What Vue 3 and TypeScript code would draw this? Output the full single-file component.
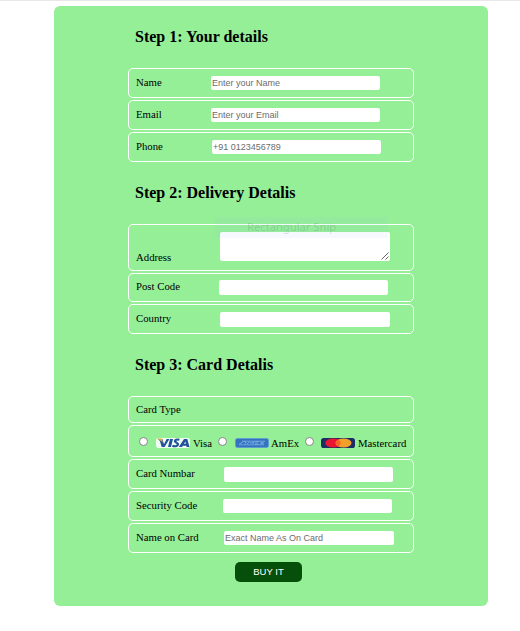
<script setup lang="ts">
interface Field {
  id: string
  label: string
  placeholder?: string
  kind: string
}

const personal: Field[] = [
  { id: 'name', label: 'Name', placeholder: 'Enter your Name', kind: 'person' },
  { id: 'email', label: 'Email', placeholder: 'Enter your Email', kind: 'person' },
  { id: 'phone', label: 'Phone', placeholder: '+91 0123456789', kind: 'phone' },
]
const delivery: Field[] = [
  { id: 'post', label: 'Post Code', kind: 'post' },
  { id: 'country', label: 'Country', kind: 'country' },
]
const card: Field[] = [
  { id: 'number', label: 'Card Numbar', kind: 'number' },
  { id: 'security', label: 'Security Code', kind: 'security' },
  { id: 'holder', label: 'Name on Card', placeholder: 'Exact Name As On Card', kind: 'holder' },
]
</script>

<template>
  <div class="page">
    <form class="checkout" @submit.prevent>
      <h2>Step 1: Your details</h2>
      <div class="group">
        <div v-for="f in personal" :key="f.id" class="row" :class="f.kind">
          <label :for="f.id">{{ f.label }}</label>
          <input :id="f.id" type="text" :placeholder="f.placeholder" />
        </div>
      </div>

      <h2>Step 2: Delivery Detalis</h2>
      <div class="group">
        <div class="row address">
          <label for="address">Address</label>
          <span class="area">
            <textarea id="address"></textarea>
            <svg class="grip" width="8" height="8" viewBox="0 0 8 8">
              <path d="M0.5 7.5L7.5 0.5M4.5 7.5L7.5 4.5" stroke="#555" stroke-width="0.9" fill="none" />
            </svg>
          </span>
          <span class="ghost">Rectangular Snip</span>
        </div>
        <div v-for="f in delivery" :key="f.id" class="row" :class="f.kind">
          <label :for="f.id">{{ f.label }}</label>
          <input :id="f.id" type="text" />
        </div>
      </div>

      <h2>Step 3: Card Detalis</h2>
      <div class="group">
        <div class="row type"><label>Card Type</label></div>
        <div class="row cards">
          <label class="option visa">
            <input type="radio" name="card" />
            <svg width="34" height="10" viewBox="0 0 34 11" preserveAspectRatio="none">
              <rect width="34" height="11" rx="2.5" fill="#fff" fill-opacity="0.85" />
              <path d="M2 1H6.3L8 6.8L10.6 1H13.4L8.6 10H5.7L3.9 3.4Z" fill="#23529c" />
              <path d="M0.8 0.5H5.6L6.8 5C5.5 3.3 3.5 2.2 0.8 0.5Z" fill="#f4a52c" />
              <path d="M14 1H17L15 10H12Z" fill="#23529c" />
              <path d="M23.4 1.9C20.8 1.3 18.9 2.1 19 3.5C19.1 5 22.3 5.3 22 7.1C21.7 9.4 18.6 9.4 16.4 8.5" fill="none" stroke="#23529c" stroke-width="2.3" />
              <path d="M22.8 10L28 1H31.3L33.5 10H30.6L30.3 8.4H26.9L26 10ZM28 6.4H29.9L29.4 3.8Z" fill="#23529c" fill-rule="evenodd" />
            </svg>
            <span>Visa</span>
          </label>
          <label class="option amex">
            <input type="radio" name="card" />
            <svg width="34" height="10" viewBox="0 0 34 11" preserveAspectRatio="none">
              <rect x="0.5" y="0.5" width="33" height="10" rx="2" fill="#3473c2" stroke="#5e9bd2" />
              <path d="M4 7.2L8 4H11L10 7M12 7L14 4L16 6L19 4L18 7M20 4H24M20 5.5H23M20 7H24M25 4L29 7M29 4L25 7" fill="none" stroke="#76a9dc" stroke-width="1" />
              <path d="M7 3.5H30M4 7.5H29" stroke="#76a9dc" stroke-width="0.9" />
            </svg>
            <span>AmEx</span>
          </label>
          <label class="option master">
            <input type="radio" name="card" />
            <svg width="34" height="10" viewBox="0 0 34 11" preserveAspectRatio="none">
              <rect width="34" height="11" rx="2.8" fill="#1e2c66" />
              <ellipse cx="12.2" cy="5.5" rx="8" ry="4.9" fill="#e91632" />
              <ellipse cx="22.5" cy="5.5" rx="8" ry="4.9" fill="#f3a02b" />
              <path d="M17.3 1.9C14 4 14 7 17.3 9.1C20.4 7 20.4 4 17.3 1.9Z" fill="#f66324" />
            </svg>
            <span>Mastercard</span>
          </label>
        </div>
        <div v-for="f in card" :key="f.id" class="row" :class="f.kind">
          <label :for="f.id">{{ f.label }}</label>
          <input :id="f.id" type="text" :placeholder="f.placeholder" />
        </div>
      </div>
      <button type="submit">BUY IT</button>
    </form>
  </div>
</template>

<style>
body {
  background: #fff;
}
</style>

<style scoped>
.page {
  box-sizing: border-box;
  height: 631px;
  padding: 5px 32px 0 54px;
  border-top: 1px solid #e8e8e8;
}
.checkout {
  box-sizing: border-box;
  width: 434px;
  height: 600px;
  padding: 0 74px;
  border-radius: 6px;
  background: #95ef97;
  color: #000;
  font: 10.75px/14px "Liberation Serif", "Times New Roman", serif;
}
h2 {
  box-sizing: border-box;
  height: 62px;
  margin: 0;
  padding: 21px 0 0 7px;
  font-size: 16px;
  line-height: 20px;
  font-weight: bold;
}
.group {
  display: flex;
  flex-direction: column;
  gap: 2px;
}
.row {
  position: relative;
  box-sizing: border-box;
  display: flex;
  align-items: flex-start;
  width: 286px;
  height: 30px;
  padding: 7px 0 0 7px;
  border: 1px solid #fff;
  border-radius: 5px;
  white-space: nowrap;
}
.row > label {
  flex: none;
  width: 75px;
  margin-top: -1px;
}
.row > input,
textarea {
  display: block;
  box-sizing: border-box;
  flex: none;
  width: 169px;
  height: 14px;
  margin: 0;
  padding: 0 1px;
  border: 0;
  border-radius: 2px;
  outline: 0;
  background: #fff;
  color: #222;
  font: 9px/14px "Liberation Sans", Arial, sans-serif;
}
.row > input::placeholder {
  color: #6c6c6c;
  opacity: 1;
}
.phone > label {
  width: 76px;
}
.post {
  height: 29px;
  padding-top: 6px;
}
.post > label {
  width: 83px;
}
.country > label {
  width: 84px;
}
.post > input,
.country > input,
.number > input {
  height: 15px;
}
.country > input,
.holder > input {
  width: 170px;
}
.number > label,
.holder > label {
  width: 88px;
}
.security > label {
  width: 87px;
}
.address {
  height: 47px;
}
.address > label {
  width: 84px;
  padding-top: 19px;
}
.area {
  position: relative;
}
textarea {
  width: 170px;
  height: 29px;
  resize: none;
}
.grip {
  position: absolute;
  right: 1px;
  bottom: 1px;
}
.ghost {
  position: absolute;
  left: 86px;
  top: -8px;
  box-sizing: border-box;
  width: 173px;
  height: 21px;
  padding: 3px 0 0 32px;
  background: rgba(145, 190, 240, 0.08);
  color: rgba(60, 100, 80, 0.2);
  font: 11.2px/14px "Noto Sans", sans-serif;
  pointer-events: none;
}
.type {
  height: 27px;
  padding-top: 6px;
}
.cards {
  height: 32px;
  padding: 11px 0 0 10px;
}
.row > .option {
  display: flex;
  align-items: flex-start;
  width: 79px;
  margin-top: 0;
}
.row > .amex {
  width: 87px;
}
.row > .master {
  width: auto;
}
.option input {
  appearance: none;
  box-sizing: border-box;
  flex: none;
  width: 9px;
  height: 9px;
  margin: 0 8px 0 0;
  border: 1px solid #858585;
  border-radius: 50%;
  background: #fff;
}
.master input {
  margin-right: 7px;
}
.option svg {
  display: block;
  flex: none;
  margin: 1px 3px 0 0;
}
.option span {
  margin-top: -1px;
}
.amex span {
  margin-left: -1px;
}
button {
  display: block;
  width: 67px;
  height: 20px;
  margin: 9px 0 0 107px;
  padding: 0;
  border: 0;
  border-radius: 5px;
  background: #064f0a;
  color: #fff;
  font: 9.5px/20px "Liberation Sans", Arial, sans-serif;
}
</style>
